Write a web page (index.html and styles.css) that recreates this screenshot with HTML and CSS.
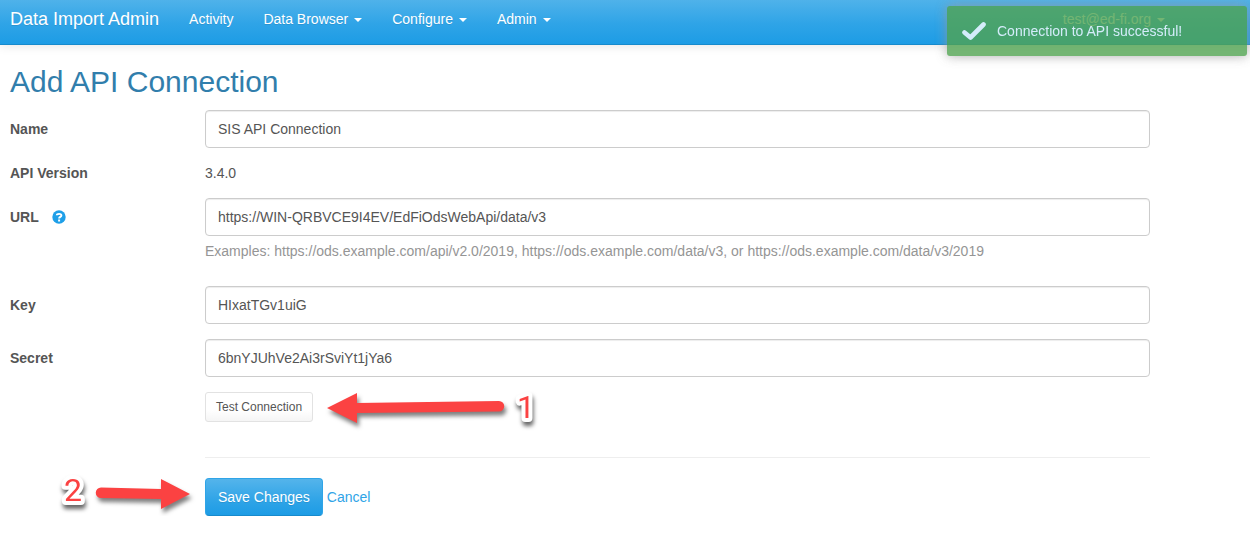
FILE: index.html
```html
<!DOCTYPE html>
<html lang="en">
<head>
<meta charset="utf-8">
<title>Add API Connection - Data Import Admin</title>
<link rel="stylesheet" href="styles.css">
</head>
<body>
<header class="navbar">
  <nav class="navbar-inner">
    <a class="brand" href="#">Data Import Admin</a>
    <a class="nav-link" href="#">Activity</a>
    <a class="nav-link" href="#">Data Browser<span class="caret"></span></a>
    <a class="nav-link" href="#">Configure<span class="caret"></span></a>
    <a class="nav-link" href="#">Admin<span class="caret"></span></a>
    <a class="nav-link nav-user" href="#">test@ed-fi.org<span class="caret"></span></a>
  </nav>
</header>

<div class="toast" role="status">
  <svg class="toast-icon" viewBox="0 0 24 18" aria-hidden="true"><path d="M2.500 10.500 L8.500 15.500 L21.500 2.500" fill="none" stroke="#fff" stroke-width="4.600" stroke-linecap="round" stroke-linejoin="round"/></svg>
  <span>Connection to API successful!</span>
</div>

<main class="content">
  <h2 class="title">Add API Connection</h2>
  <form class="form">
    <div class="row">
      <label class="label" for="name">Name</label>
      <input class="field" id="name" type="text" value="SIS API Connection">
    </div>
    <div class="row">
      <span class="label">API Version</span>
      <span>3.4.0</span>
    </div>
    <div class="row row-help">
      <label class="label" for="url">URL
        <svg class="help-icon" viewBox="0 0 14 14" aria-hidden="true"><circle cx="7" cy="7" r="6.7" fill="#1e9fe8"/><path d="M4.8 5.3 C4.9 3.4 9.4 3.2 9.4 5.5 C9.4 7 7.1 6.8 7.1 8.5" fill="none" stroke="#fff" stroke-width="1.9"/><rect x="6.1" y="9.5" width="2" height="2" fill="#fff"/></svg>
      </label>
      <div>
        <input class="field" id="url" type="text" value="https://WIN-QRBVCE9I4EV/EdFiOdsWebApi/data/v3">
        <p class="help">Examples: https://ods.example.com/api/v2.0/2019, https://ods.example.com/data/v3, or https://ods.example.com/data/v3/2019</p>
      </div>
    </div>
    <div class="row">
      <label class="label" for="key">Key</label>
      <input class="field" id="key" type="text" value="HIxatTGv1uiG">
    </div>
    <div class="row">
      <label class="label" for="secret">Secret</label>
      <input class="field" id="secret" type="text" value="6bnYJUhVe2Ai3rSviYt1jYa6">
    </div>
    <div class="row">
      <div class="controls">
        <button class="btn-test" type="button">Test Connection</button>
        <svg class="step step-one" viewBox="0 0 240 50" role="img" aria-label="Step 1">
          <g class="drop"><path d="M7 25 L37 10 V20 L179 18 A5 5 0 0 1 179 28.500 L37 30 V40 Z" fill="#fb4242"/></g>
          <text class="step-number" x="197" y="35">1</text>
        </svg>
      </div>
    </div>
    <div class="row">
      <div class="controls">
        <hr class="rule">
        <div class="actions">
          <button class="btn-save" type="submit">Save Changes</button>
          <a class="cancel" href="#">Cancel</a>
          <svg class="step step-two" viewBox="0 0 145 50" role="img" aria-label="Step 2">
            <text class="step-number" x="9" y="34">2</text>
            <g class="drop"><path d="M135 27 L106 12 V22 L46 20.500 A5 5 0 0 0 46 31 L106 32 V42 Z" fill="#fb4242"/></g>
          </svg>
        </div>
      </div>
    </div>
  </form>
</main>
</body>
</html>
```
FILE: styles.css
```css
* {
  box-sizing: border-box;
}

body {
  margin: 0;
  background: #fff;
  color: #555;
  font: 14px/20px "Liberation Sans", Arial, sans-serif;
}

a {
  color: #2fa4e7;
  text-decoration: none;
}

.navbar {
  padding: 0 10px 6px;
  border-bottom: 1px solid #178acc;
  background: linear-gradient(#4fb2ea, #2fa4e7 54%, #1d9ce5);
  box-shadow: 0 1px 10px rgba(0, 0, 0, 0.1);
}

.navbar-inner {
  display: flex;
  align-items: center;
  max-width: 1170px;
  height: 38px;
}

.brand {
  margin-right: 15px;
  color: #fff;
  font-size: 18px;
  text-shadow: 0 1px 0 rgba(0, 0, 0, 0.1);
}

.nav-link {
  padding: 0 15px;
  color: #fff;
  text-shadow: 0 1px 0 rgba(0, 0, 0, 0.1);
}

.nav-user {
  margin-left: auto;
}

.caret {
  display: inline-block;
  margin-left: 6px;
  border: 4px solid transparent;
  border-top-color: #fff;
  border-bottom: 0;
  vertical-align: middle;
}

.toast {
  position: fixed;
  top: 6px;
  right: 3px;
  display: flex;
  align-items: center;
  gap: 11px;
  width: 300px;
  padding: 15px;
  border-radius: 3px;
  background: #51a351;
  box-shadow: 0 0 12px #999;
  color: #fff;
  opacity: 0.8;
}

.toast-icon {
  width: 24px;
  height: 18px;
}

.content {
  max-width: 1160px;
  padding: 0 10px;
}

.title {
  margin: 20px 0 12px;
  color: #317eac;
  font-size: 30px;
  font-weight: 400;
  line-height: 33px;
}

.form {
  display: grid;
  gap: 15px;
}

.row {
  display: grid;
  grid-template-columns: 195px 1fr;
  align-items: center;
}

.row-help {
  align-items: start;
}

.row-help .label {
  padding-top: 9px;
}

.label {
  font-weight: 700;
}

.controls {
  grid-column: 2;
  position: relative;
}

.field {
  display: block;
  width: 100%;
  height: 38px;
  padding: 8px 12px;
  border: 1px solid #ccc;
  border-radius: 4px;
  background: #fff;
  box-shadow: inset 0 1px 1px rgba(0, 0, 0, 0.075);
  color: #555;
  font: inherit;
}

.help {
  margin: 5px 0 10px;
  color: #959595;
}

.help-icon {
  width: 14px;
  height: 14px;
  margin-left: 10px;
  vertical-align: -2px;
}

.btn-test {
  display: block;
  height: 30px;
  padding: 0 10px;
  border: 1px solid #e2e2e2;
  border-radius: 3px;
  background: linear-gradient(#fff, #fff 60%, #f5f5f5);
  color: #555;
  font: 12px/18px "Liberation Sans", Arial, sans-serif;
}

.rule {
  height: 1px;
  margin: 20px 0;
  border: 0;
  background: #eee;
}

.actions {
  display: flex;
  align-items: center;
  gap: 4px;
  position: relative;
}

.btn-save {
  height: 38px;
  padding: 0 12px;
  border: 1px solid #2fa4e7;
  border-bottom-color: #178acc;
  border-radius: 4px;
  background: linear-gradient(#54b4eb, #2fa4e7 60%, #1d9ce5);
  color: #fff;
  font: inherit;
  text-shadow: 0 1px 0 rgba(0, 0, 0, 0.1);
}

.step {
  position: absolute;
  overflow: visible;
  pointer-events: none;
}

.step-one {
  top: -9px;
  left: 115px;
  width: 240px;
  height: 50px;
}

.step-two {
  top: -11px;
  left: -150px;
  width: 145px;
  height: 50px;
}

.drop {
  filter: drop-shadow(2px 4px 2px rgba(0, 0, 0, 0.5));
}

.step-number {
  fill: #fb4242;
  stroke: #fff;
  stroke-width: 8px;
  stroke-linejoin: round;
  paint-order: stroke;
  font-family: Roboto, sans-serif;
  font-size: 32px;
  filter: drop-shadow(1px 4px 2px rgba(0, 0, 0, 0.6));
}
```
